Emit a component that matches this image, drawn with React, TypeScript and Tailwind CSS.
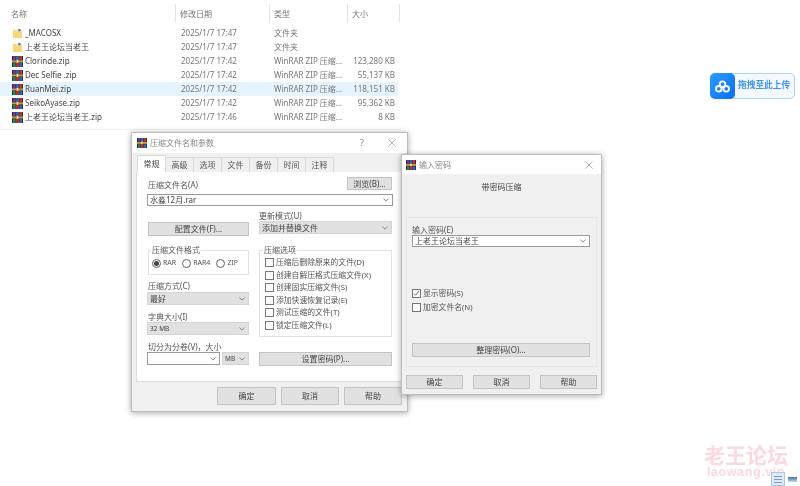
import React from 'react';

const files = [
  { name: '_MACOSX', date: '2025/1/7 17:47', type: '文件夹', size: '', folder: true },
  { name: '上老王论坛当老王', date: '2025/1/7 17:47', type: '文件夹', size: '', folder: true },
  { name: 'Clorinde.zip', date: '2025/1/7 17:42', type: 'WinRAR ZIP 压缩...', size: '123,280 KB' },
  { name: 'Dec Selfie .zip', date: '2025/1/7 17:42', type: 'WinRAR ZIP 压缩...', size: '55,137 KB' },
  { name: 'RuanMei.zip', date: '2025/1/7 17:42', type: 'WinRAR ZIP 压缩...', size: '118,151 KB', selected: true },
  { name: 'SeikoAyase.zip', date: '2025/1/7 17:42', type: 'WinRAR ZIP 压缩...', size: '95,362 KB' },
  { name: '上老王论坛当老王.zip', date: '2025/1/7 17:46', type: 'WinRAR ZIP 压缩...', size: '8 KB' },
];

const tabs = ['常规', '高级', '选项', '文件', '备份', '时间', '注释'];

const compressOptions = [
  '压缩后删除原来的文件(D)',
  '创建自解压格式压缩文件(X)',
  '创建固实压缩文件(S)',
  '添加快速恢复记录(E)',
  '测试压缩的文件(T)',
  '锁定压缩文件(L)',
];

function RarIcon({ className = 'w-[11px] h-[11px]' }: { className?: string }) {
  return (
    <svg viewBox="0 0 12 12" className={className}>
      <rect x="0" y="0" width="12" height="12" fill="#2e2348" />
      <rect x="1" y="0" width="3" height="4.5" fill="#6c3a94" />
      <rect x="4.5" y="0" width="3" height="4.5" fill="#2f6aa8" />
      <rect x="8" y="0" width="3" height="4.5" fill="#b8362e" />
      <rect x="0" y="4.8" width="12" height="2.2" fill="#c79a3a" />
      <rect x="5" y="4.2" width="2" height="3.6" fill="#ecd98f" />
      <rect x="1" y="7.5" width="3" height="4.5" fill="#2c8049" />
      <rect x="4.5" y="7.5" width="3" height="4.5" fill="#b8362e" />
      <rect x="8" y="7.5" width="3" height="4.5" fill="#2f6aa8" />
    </svg>
  );
}

function FolderIcon() {
  return (
    <svg viewBox="0 0 12 12" className="w-[11px] h-[11px]">
      <path d="M1 2h3.5l1 1.5H11V11H1z" fill="#f6d77e" />
      <path d="M5 1h2v3H5z" fill="#fbe9b0" />
      <path d="M7 0.5 10.5 2.5 7 4z" fill="#4a6f96" />
    </svg>
  );
}

function Chevron() {
  return (
    <svg viewBox="0 0 8 5" className="w-[6px] h-[4px] shrink-0" fill="none" stroke="#666" strokeWidth="1">
      <path d="M0.5 0.5 4 4l3.5-3.5" />
    </svg>
  );
}

function CloseIcon() {
  return (
    <svg viewBox="0 0 10 10" className="w-[8px] h-[8px]" fill="none" stroke="#888" strokeWidth="0.8">
      <path d="M0.5 0.5l9 9M9.5 0.5l-9 9" />
    </svg>
  );
}

function WinButton({ label, className = '' }: { label: string; className?: string }) {
  return (
    <div className={`flex items-center justify-center bg-[#e1e1e1] border border-[#c4c4c4] text-[8px] text-[#444] ${className}`}>
      {label}
    </div>
  );
}

function Select({ value, small, className = '' }: { value: string; small?: boolean; className?: string }) {
  return (
    <div className={`flex items-center justify-between bg-[#e1e1e1] border border-[#d4d4d4] pl-[2px] pr-[3px] text-[#444] ${className}`}>
      <span className={small ? 'text-[6.5px]' : 'text-[8px]'}>{value}</span>
      <Chevron />
    </div>
  );
}

function Combo({ value, className = '' }: { value: string; className?: string }) {
  return (
    <div className={`flex items-center justify-between bg-white border border-[#9a9a9a] pl-[2px] pr-[3px] text-[#444] ${className}`}>
      <span>{value}</span>
      <Chevron />
    </div>
  );
}

function Checkbox({ label, checked }: { label: string; checked?: boolean }) {
  return (
    <div className="flex items-center gap-[2px] text-[7.8px] leading-[9px] text-[#555]">
      <div className="flex items-center justify-center w-[9px] h-[9px] bg-white border border-[#777] shrink-0">
        {checked && (
          <svg viewBox="0 0 8 8" className="w-[7px] h-[7px]" fill="none" stroke="#555" strokeWidth="1">
            <path d="M1 4l2 2 4-5" />
          </svg>
        )}
      </div>
      <span>{label}</span>
    </div>
  );
}

function Radio({ label, checked }: { label: string; checked?: boolean }) {
  return (
    <div className="flex items-center gap-[2px] text-[7px] text-[#555]">
      <div className="flex items-center justify-center w-[9px] h-[9px] rounded-full bg-white border border-[#666] shrink-0">
        {checked && <div className="w-[5px] h-[5px] rounded-full bg-[#444]" />}
      </div>
      <span>{label}</span>
    </div>
  );
}

function FileList() {
  return (
    <div className="w-[401px] pt-[4px] text-[8px]">
      <div className="flex h-[19px] items-center text-[#777]">
        <div className="w-[176px] pl-[11px] border-r border-[#e5e5e5] h-full flex items-center">名称</div>
        <div className="w-[94px] pl-[4px] border-r border-[#e5e5e5] h-full flex items-center">修改日期</div>
        <div className="w-[78px] pl-[4px] border-r border-[#e5e5e5] h-full flex items-center">类型</div>
        <div className="w-[52px] pl-[4px] border-r border-[#e5e5e5] h-full flex items-center">大小</div>
      </div>
      <div className="mt-[3px] border-b border-[#f2f2f2] pb-[5px]">
        {files.map((f) => (
          <div key={f.name} className={`flex items-center h-[14px] w-[398px] ${f.selected ? 'bg-[#e5f3ff]' : ''}`}>
            <div className="w-[176px] pl-[12px] flex items-center gap-[2px] text-[#444]">
              {f.folder ? <FolderIcon /> : <RarIcon />}
              <span>{f.name}</span>
            </div>
            <div className="w-[98px] pl-[5px] text-[#777]">{f.date}</div>
            <div className="w-[78px] text-[#777]">{f.type}</div>
            <div className="w-[43px] text-right text-[#777] whitespace-nowrap">{f.size}</div>
          </div>
        ))}
      </div>
    </div>
  );
}

function ArchiveDialog() {
  return (
    <div className="absolute left-[131px] top-[132px] w-[277px] h-[280px] flex flex-col bg-[#f0f0f0] border border-[#bdbdbd] shadow-[0_1px_6px_rgba(0,0,0,0.35)] text-[8px]">
      <div className="flex items-center h-[20px] bg-white shrink-0 pl-[5px] pr-[11px] gap-[3px] text-[#888]">
        <RarIcon className="w-[10px] h-[10px]" />
        <span className="flex-1">压缩文件名和参数</span>
        <span className="mr-[21px] text-[9px]">?</span>
        <CloseIcon />
      </div>
      <div className="flex pl-[5px] h-[19px] items-end shrink-0">
        {tabs.map((t, i) => (
          <div
            key={t}
            className={
              i === 0
                ? 'flex items-center justify-center w-[29px] h-[17px] bg-white border border-b-0 border-[#d9d9d9] text-[#444]'
                : 'flex items-center justify-center w-[28px] h-[15px] bg-[#f0f0f0] border-r border-t border-[#d9d9d9] text-[#555]'
            }
          >
            {t}
          </div>
        ))}
      </div>
      <div className="ml-[4px] mr-[4px] h-[210px] bg-white border border-t-0 border-[#dcdcdc] pl-[10px] pr-[9px] pt-[5px] text-[#555]">
        <div className="flex justify-between items-center h-[13px]">
          <span className="pl-[1px] pt-[3px]">压缩文件名(A)</span>
          <WinButton label="浏览(B)..." className="w-[45px] h-[13px] mr-[1px]" />
        </div>
        <Combo value="水淼12月.rar" className="h-[12px] mt-[4px]" />
        <div className="grid grid-cols-[102px_133px] gap-x-[10px]">
          <div className="flex flex-col">
            <WinButton label="配置文件(F)..." className="w-[101px] h-[14px] mt-[16px] ml-[1px]" />
            <fieldset className="mt-[9px] border border-[#e2e2e2] h-[30px] ml-[1px] w-[101px]">
              <legend className="ml-[2px] px-[1px] leading-[10px]">压缩文件格式</legend>
              <div className="flex gap-[6px] pl-[3px] pt-[3px]">
                <Radio label="RAR" checked />
                <Radio label="RAR4" />
                <Radio label="ZIP" />
              </div>
            </fieldset>
            <span className="mt-[5px] pl-[1px] leading-[11px]">压缩方式(C)</span>
            <Select value="最好" className="h-[13px] mt-[1px]" />
            <span className="mt-[6px] pl-[1px] leading-[11px]">字典大小(I)</span>
            <Select value="32 MB" small className="h-[13px]" />
            <span className="mt-[6px] pl-[1px] leading-[11px]">切分为分卷(V)，大小</span>
            <div className="flex gap-[2px]">
              <Combo value="" className="w-[73px] h-[13px]" />
              <Select value="MB" small className="w-[27px] h-[13px]" />
            </div>
          </div>
          <div className="flex flex-col">
            <span className="mt-[5px] leading-[10px]">更新模式(U)</span>
            <Select value="添加并替换文件" className="h-[13px]" />
            <fieldset className="mt-[11px] border border-[#e2e2e2] h-[92px]">
              <legend className="ml-[3px] px-[1px] leading-[10px]">压缩选项</legend>
              <div className="flex flex-col gap-[3.5px] pt-[3px] pl-[5px]">
                {compressOptions.map((o) => (
                  <Checkbox key={o} label={o} />
                ))}
              </div>
            </fieldset>
            <WinButton label="设置密码(P)..." className="h-[14px] mt-[15px]" />
          </div>
        </div>
      </div>
      <div className="flex justify-end gap-[5px] pr-[5px] pt-[5px]">
        <WinButton label="确定" className="w-[59px] h-[18px]" />
        <WinButton label="取消" className="w-[58px] h-[18px]" />
        <WinButton label="帮助" className="w-[58px] h-[18px]" />
      </div>
    </div>
  );
}

function PasswordDialog() {
  return (
    <div className="absolute left-[401px] top-[154px] w-[201px] h-[241px] flex flex-col bg-[#f0f0f0] border border-[#bdbdbd] shadow-[0_1px_6px_rgba(0,0,0,0.35)] text-[8px]">
      <div className="flex items-center h-[19px] bg-white shrink-0 pl-[4px] pr-[8px] gap-[3px] text-[#888]">
        <RarIcon className="w-[10px] h-[10px]" />
        <span className="flex-1">输入密码</span>
        <CloseIcon />
      </div>
      <div className="text-center text-[#444] pt-[7px] h-[43px] shrink-0">带密码压缩</div>
      <div className="mx-[4px] h-[150px] border border-[#e6e6e6] pl-[5px] pr-[6px] pt-[6px] text-[#555]">
        <div className="leading-[11px]">输入密码(E)</div>
        <Combo value="上老王论坛当老王" className="h-[12px]" />
        <div className="flex flex-col gap-[5px] mt-[42px]">
          <Checkbox label="显示密码(S)" checked />
          <Checkbox label="加密文件名(N)" />
        </div>
        <WinButton label="整理密码(O)..." className="h-[14px] mt-[31px]" />
      </div>
      <div className="flex justify-between px-[4px] pt-[8px]">
        <WinButton label="确定" className="w-[57px] h-[14px]" />
        <WinButton label="取消" className="w-[57px] h-[14px]" />
        <WinButton label="帮助" className="w-[57px] h-[14px]" />
      </div>
    </div>
  );
}

function UploadButton() {
  return (
    <div className="absolute left-[710px] top-[73px] w-[85px] h-[26px] flex items-center bg-[#f3f9ff] border border-[#a9d4fb] rounded-[5px]">
      <div className="flex items-center justify-center w-[25px] h-[26px] -ml-px rounded-[5px] bg-gradient-to-br from-[#2b9cff] to-[#0a6ef0]">
        <svg viewBox="0 0 16 14" className="w-[15px] h-[13px]" fill="none" stroke="white" strokeWidth="2">
          <circle cx="8" cy="4.5" r="3" />
          <circle cx="4" cy="9.5" r="3" />
          <circle cx="12" cy="9.5" r="3" />
        </svg>
      </div>
      <span className="ml-[3px] text-[8.7px] font-bold text-[#3d96f2] whitespace-nowrap">拖拽至此上传</span>
    </div>
  );
}

function Watermark() {
  return (
    <div className="absolute left-[702px] top-[443px] flex flex-col items-center w-[88px]">
      <div className="text-[21px] leading-[24px] font-bold text-[#fcd9df] whitespace-nowrap">老王论坛</div>
      <div className="text-[12.5px] leading-[11px] font-bold tracking-[0.6px] text-[#fcd9df] whitespace-nowrap font-['Liberation_Sans',sans-serif]">laowang.vip</div>
    </div>
  );
}

function TrayIcons() {
  return (
    <div className="absolute left-[771px] top-[472px] flex items-center gap-[3px]">
      <div className="flex flex-col justify-center gap-[2px] w-[14px] h-[14px] px-[2px] bg-[#dbeafe] border border-[#a9c6e8]">
        <div className="h-px bg-[#8a9bb0]" />
        <div className="h-px bg-[#8a9bb0]" />
        <div className="h-px bg-[#8a9bb0]" />
      </div>
      <div className="w-[9px] h-[5px] bg-gradient-to-b from-[#3f6f9f] to-[#c9dcec]" />
    </div>
  );
}

export default function App() {
  return (
    <div className="relative w-[800px] h-[486px] overflow-hidden bg-white font-['Noto_Sans','Noto_Sans_CJK_SC',sans-serif] blur-[0.4px]">
      <FileList />
      <ArchiveDialog />
      <PasswordDialog />
      <UploadButton />
      <Watermark />
      <TrayIcons />
    </div>
  );
}
